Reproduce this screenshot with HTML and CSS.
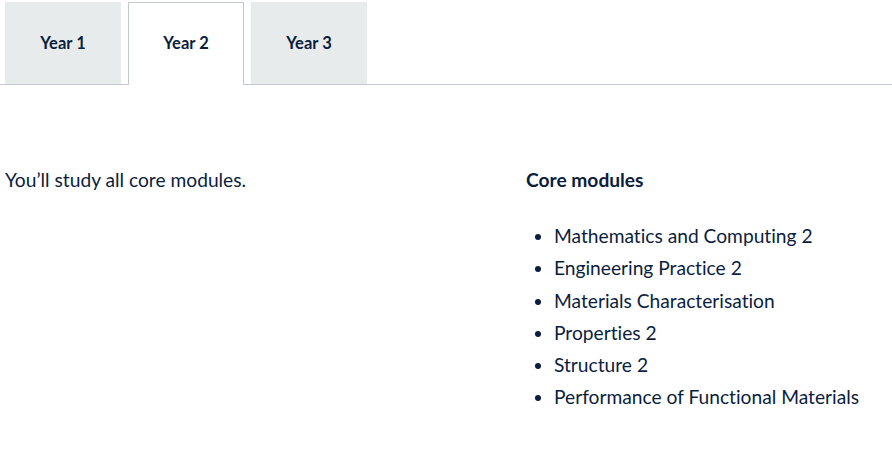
FILE: index.html
```html
<!DOCTYPE html>
<html lang="en">
<head>
<meta charset="utf-8">
<title>Year 2 modules</title>
<link rel="stylesheet" href="styles.css">
</head>
<body>
<div class="tabs">
  <div class="tab">Year 1</div>
  <div class="tab active">Year 2</div>
  <div class="tab">Year 3</div>
</div>
<div class="panel">
  <p class="intro">You’ll study all core modules.</p>
  <div class="modules">
    <h3>Core modules</h3>
    <ul>
      <li>Mathematics and Computing 2</li>
      <li>Engineering Practice 2</li>
      <li>Materials Characterisation</li>
      <li>Properties 2</li>
      <li>Structure 2</li>
      <li>Performance of Functional Materials</li>
    </ul>
  </div>
</div>
</body>
</html>
```
FILE: styles.css
```css
html, body {
  margin: 0;
  padding: 0;
  background: #fff;
}
body {
  font-family: Lato, "Open Sans", sans-serif;
  font-variant-ligatures: none;
  color: #0b1d3d;
}
.tabs {
  display: flex;
  gap: 7px;
  padding: 2px 0 0 5px;
  border-bottom: 1px solid #c3c8ce;
  height: 82px;
}
.tab {
  width: 116px;
  height: 82px;
  box-sizing: border-box;
  display: flex;
  align-items: center;
  justify-content: center;
  padding-bottom: 0;
  background: #e8ebec;
  font-weight: 700;
  font-size: 16.5px;
}
.tab.active {
  background: #fff;
  border: 1px solid #c3c8ce;
  border-bottom: none;
  height: 83px;
  padding-bottom: 2px;
  margin-bottom: -1px;
}
.panel {
  display: grid;
  grid-template-columns: 521px 1fr;
  padding: 81px 0 0 5px;
}
.intro {
  margin: 0;
  font-size: 19.2px;
  line-height: 28px;
}
.modules h3 {
  margin: 0;
  font-size: 19.2px;
  line-height: 28px;
  font-weight: 700;
}
.modules ul {
  margin: 26px 0 0;
  padding: 0 0 0 28px;
  font-size: 19.2px;
  line-height: 32.3px;
}
```
